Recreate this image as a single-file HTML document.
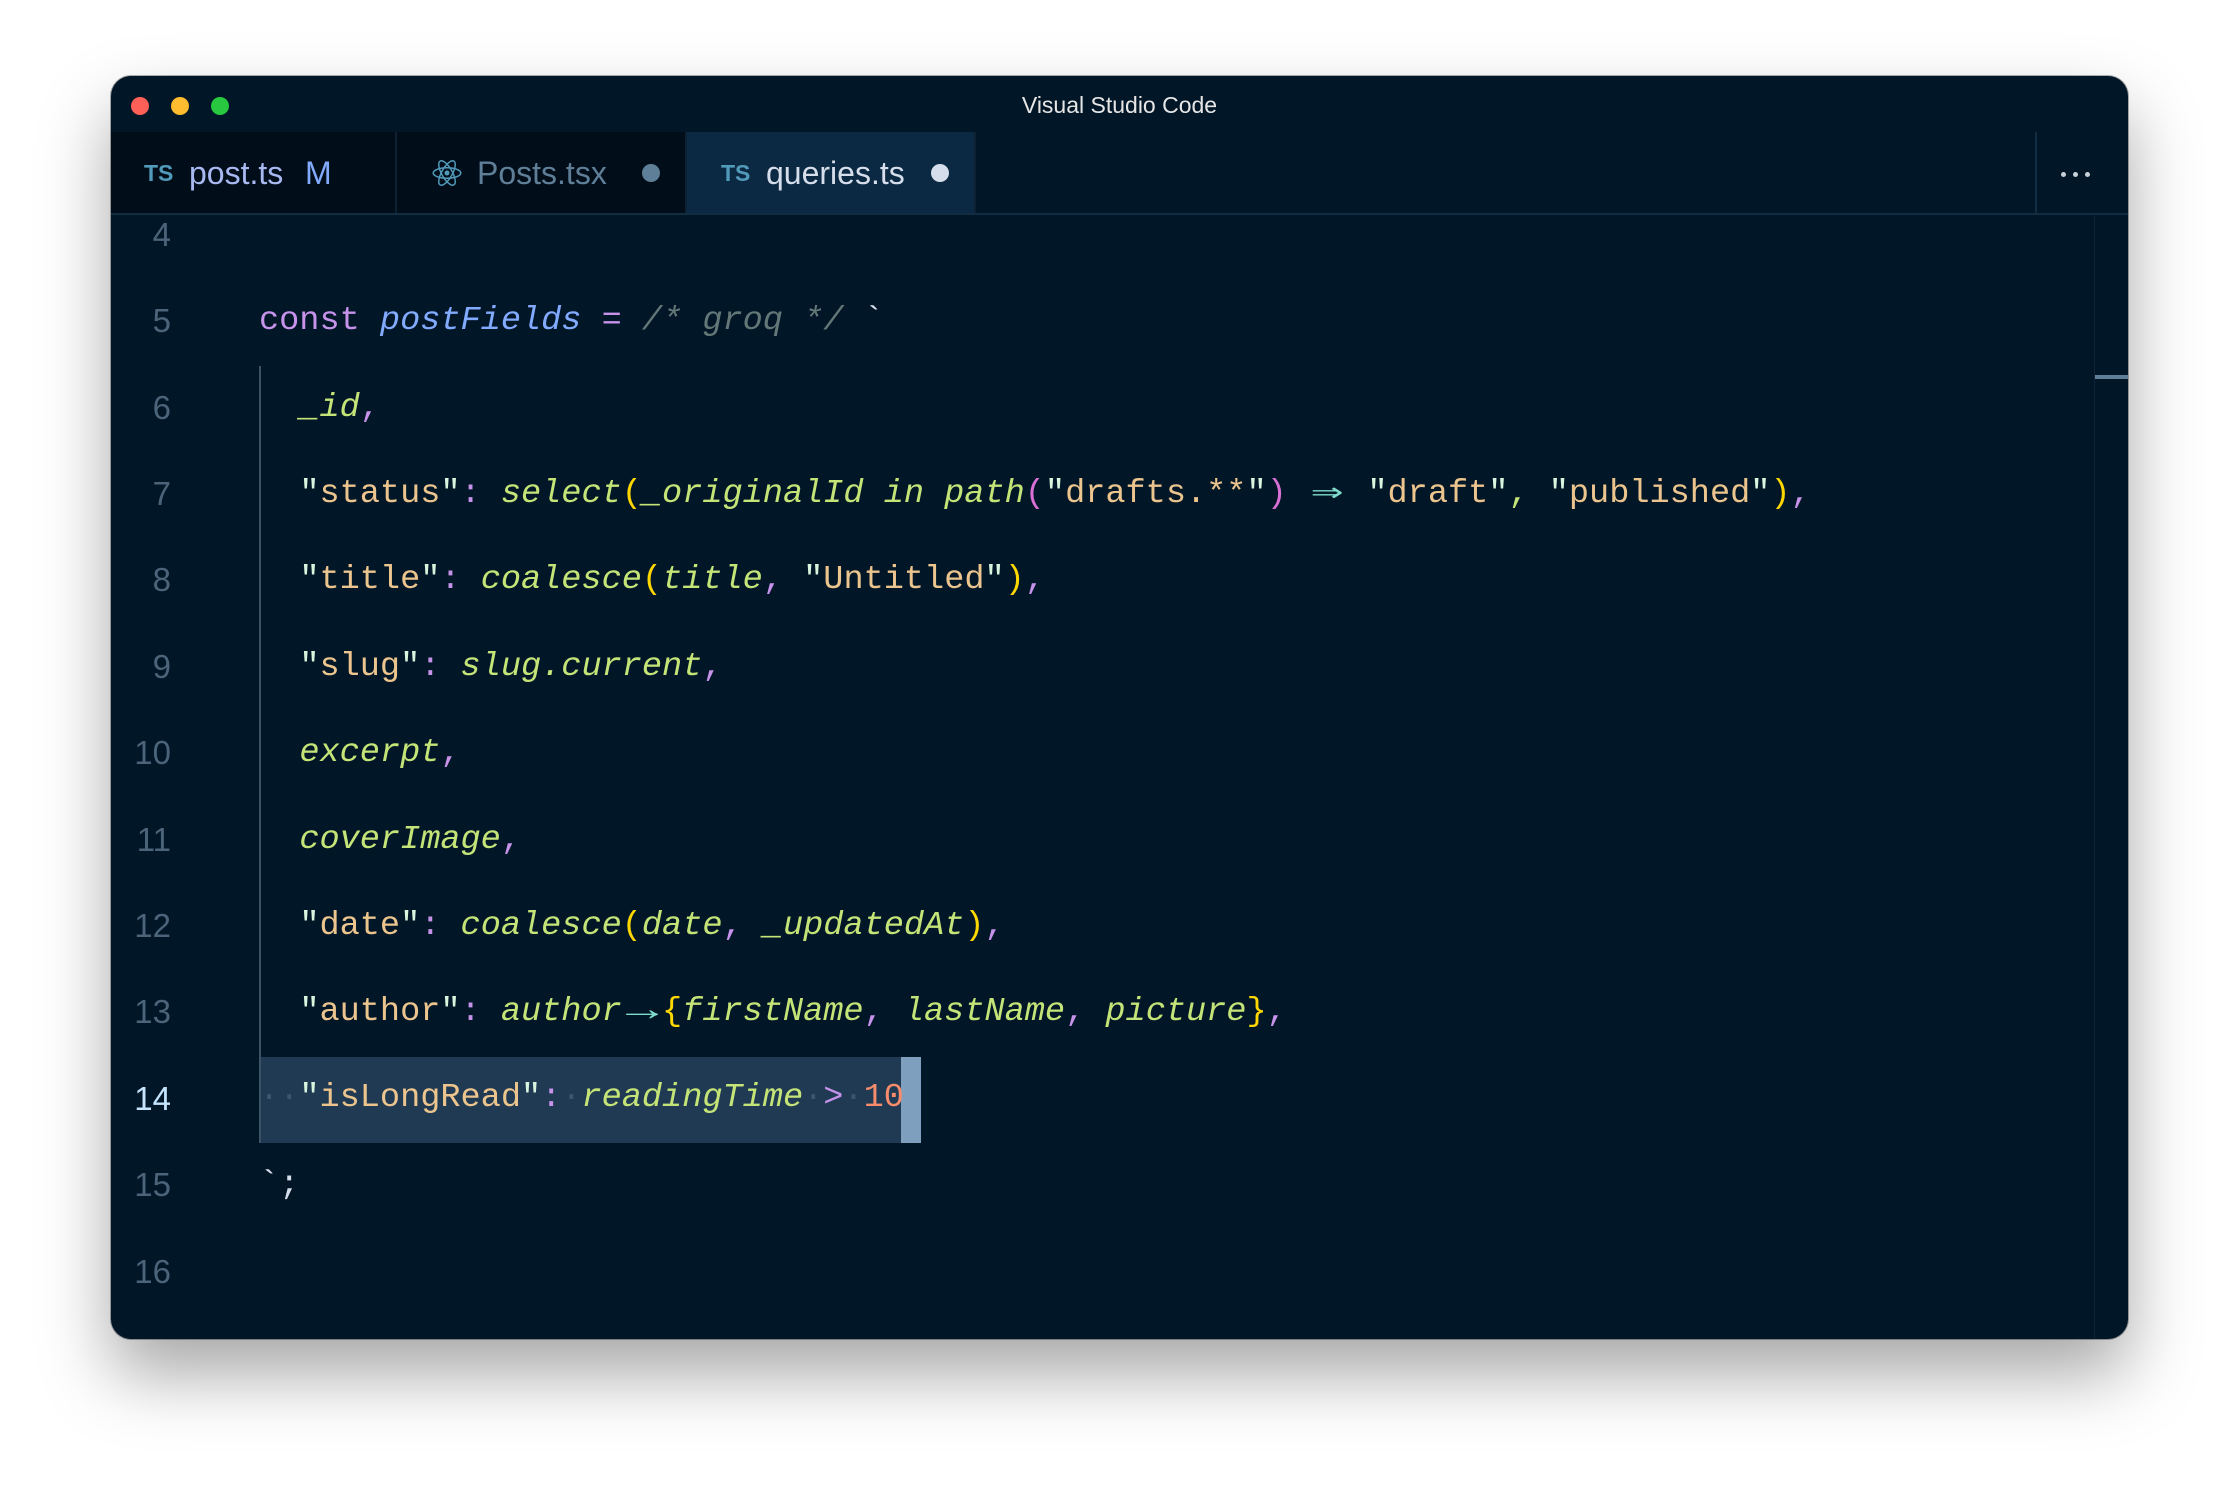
<!DOCTYPE html>
<html><head><meta charset="utf-8"><style>
*{margin:0;padding:0;box-sizing:border-box}
html,body{width:2240px;height:1488px;background:#fff;overflow:hidden;position:relative}
.win{position:absolute;left:111px;top:76px;width:2017px;height:1263px;background:#011627;border-radius:20px;overflow:hidden;box-shadow:0 35px 70px rgba(0,0,0,.35),0 0 0 1px rgba(0,0,0,.3)}
.tl{position:absolute;top:21px;width:18px;height:18px;border-radius:50%}
.title{position:absolute;left:0;width:100%;top:16px;text-align:center;color:#e6e6e6;font:23px "Liberation Sans",sans-serif}
.tabbar{position:absolute;left:0;top:56px;width:100%;height:83px;border-bottom:2px solid #122d42}
.tab{position:absolute;top:0;height:81px;background:#010e1a;border-right:2px solid #0d2133}
.tt{position:absolute;top:0;height:81px;font:32px "Liberation Sans",sans-serif;line-height:83px;white-space:nowrap}
.ts{position:absolute;top:0;height:81px;font:bold 23px "Liberation Sans",sans-serif;line-height:83px;color:#519aba}
.dot{width:18px;height:18px;border-radius:50%;position:absolute;top:32px}
.ln{position:absolute;left:0;width:60px;text-align:right;color:#4b6479;height:86px;line-height:86px;font-family:"Liberation Sans",sans-serif;font-size:33px}
.l{position:absolute;left:148px;height:86px;line-height:86px;color:#d6deeb;font-family:"Liberation Mono",monospace;font-size:33.6px;white-space:pre}
.k{color:#c792ea}.v{color:#82aaff;font-style:italic}.c{color:#637777;font-style:italic}
.s{color:#ecc48d}.q{color:#d9f5dd}.g{color:#c5e478;font-style:italic}.p{color:#c792ea}.y{color:#ffd700}.m{color:#da70d6}.t{color:#7fdbca}.n{color:#f78c6c}.gc{color:#c5e478}
.lig{display:inline-block;width:2ch;text-align:center;font-style:normal;transform:scaleX(1.6)}
.ws{color:#3a566b}
</style></head><body>
<div class="win">
 <div class="tl" style="left:20px;background:#fe5f57"></div>
 <div class="tl" style="left:60px;background:#febc2e"></div>
 <div class="tl" style="left:100px;background:#28c840"></div>
 <div class="title">Visual Studio Code</div>
 <div class="tabbar">
  <div class="tab" style="left:0;width:286px"></div>
  <div class="ts" style="left:33px">TS</div>
  <div class="tt" style="left:78px;color:#a8b8f0">post.ts</div>
  <div class="tt" style="left:194px;color:#82aaff">M</div>
  <div class="tab" style="left:286px;width:290px"></div>
  <svg width="30" height="30" viewBox="-12 -12 24 24" style="position:absolute;left:321px;top:26px" fill="none" stroke="#519aba" stroke-width="1.2"><ellipse rx="11" ry="4.2"/><ellipse rx="11" ry="4.2" transform="rotate(60)"/><ellipse rx="11" ry="4.2" transform="rotate(120)"/><circle r="2" fill="#519aba" stroke="none"/></svg>
  <div class="tt" style="left:366px;color:#5f7e97">Posts.tsx</div>
  <div class="dot" style="left:531px;background:#5f7e97"></div>
  <div class="tab" style="left:576px;width:289px;background:#0b2942"></div>
  <div class="ts" style="left:610px">TS</div>
  <div class="tt" style="left:655px;color:#d6deeb">queries.ts</div>
  <div class="dot" style="left:820px;background:#d6deeb"></div>
  <div style="position:absolute;left:1924px;top:0;width:2px;height:81px;background:#122d42"></div>
  <div style="position:absolute;left:1950px;top:40px;width:5px;height:5px;border-radius:50%;background:#c8d0d8;box-shadow:12px 0 0 #c8d0d8,24px 0 0 #c8d0d8"></div>
 </div>
 <div style="position:absolute;left:1983px;top:140px;width:1px;height:1130px;background:#0f2438"></div>
 <div style="position:absolute;left:1984px;top:299px;width:33px;height:4px;background:#5f7e97"></div>

 <div style="position:absolute;left:148px;top:981px;width:662px;height:86px;background:#1f3a52"></div>
 <div style="position:absolute;left:790px;top:981px;width:20px;height:86px;background:#7f9fbf"></div>
 <div style="position:absolute;left:148px;top:290px;width:2px;height:777px;background:#3b5366"></div>

 <div class="ln" style="top:116px">4</div>
 <div class="ln" style="top:202px">5</div><div class="l" style="top:202px"><span class="k">const</span> <span class="v">postFields</span> <span class="k">=</span> <span class="c">/* groq */</span> `</div>
 <div class="ln" style="top:289px">6</div><div class="l" style="top:289px">  <span class="g">_id</span><span class="p">,</span></div>
 <div class="ln" style="top:375px">7</div><div class="l" style="top:375px">  <span class="q">"</span><span class="s">status</span><span class="q">"</span><span class="p">:</span> <span class="g">select</span><span class="y">(</span><span class="g">_originalId in path</span><span class="m">(</span><span class="q">"</span><span class="s">drafts.**</span><span class="q">"</span><span class="m">)</span> <span class="t lig">⇒</span> <span class="q">"</span><span class="s">draft</span><span class="q">"</span><span class="gc">,</span> <span class="q">"</span><span class="s">published</span><span class="q">"</span><span class="y">)</span><span class="p">,</span></div>
 <div class="ln" style="top:461px">8</div><div class="l" style="top:461px">  <span class="q">"</span><span class="s">title</span><span class="q">"</span><span class="p">:</span> <span class="g">coalesce</span><span class="y">(</span><span class="g">title</span><span class="p">,</span> <span class="q">"</span><span class="s">Untitled</span><span class="q">"</span><span class="y">)</span><span class="p">,</span></div>
 <div class="ln" style="top:548px">9</div><div class="l" style="top:548px">  <span class="q">"</span><span class="s">slug</span><span class="q">"</span><span class="p">:</span> <span class="g">slug.current</span><span class="p">,</span></div>
 <div class="ln" style="top:634px">10</div><div class="l" style="top:634px">  <span class="g">excerpt</span><span class="p">,</span></div>
 <div class="ln" style="top:721px">11</div><div class="l" style="top:721px">  <span class="g">coverImage</span><span class="p">,</span></div>
 <div class="ln" style="top:807px">12</div><div class="l" style="top:807px">  <span class="q">"</span><span class="s">date</span><span class="q">"</span><span class="p">:</span> <span class="g">coalesce</span><span class="y">(</span><span class="g">date</span><span class="p">,</span> <span class="g">_updatedAt</span><span class="y">)</span><span class="p">,</span></div>
 <div class="ln" style="top:893px">13</div><div class="l" style="top:893px">  <span class="q">"</span><span class="s">author</span><span class="q">"</span><span class="p">:</span> <span class="g">author</span><span class="t lig">→</span><span class="y">{</span><span class="g">firstName</span><span class="p">,</span> <span class="g">lastName</span><span class="p">,</span> <span class="g">picture</span><span class="y">}</span><span class="p">,</span></div>
 <div class="ln" style="top:980px;color:#c5e4fd">14</div><div class="l" style="top:979px"><span class="ws">··</span><span class="q">"</span><span class="s">isLongRead</span><span class="q">"</span><span class="p">:</span><span class="ws">·</span><span class="g">readingTime</span><span class="ws">·</span><span class="k">&gt;</span><span class="ws">·</span><span class="n">10</span></div>
 <div class="ln" style="top:1066px">15</div><div class="l" style="top:1066px">`;</div>
 <div class="ln" style="top:1153px">16</div>
</div>
</body></html>
